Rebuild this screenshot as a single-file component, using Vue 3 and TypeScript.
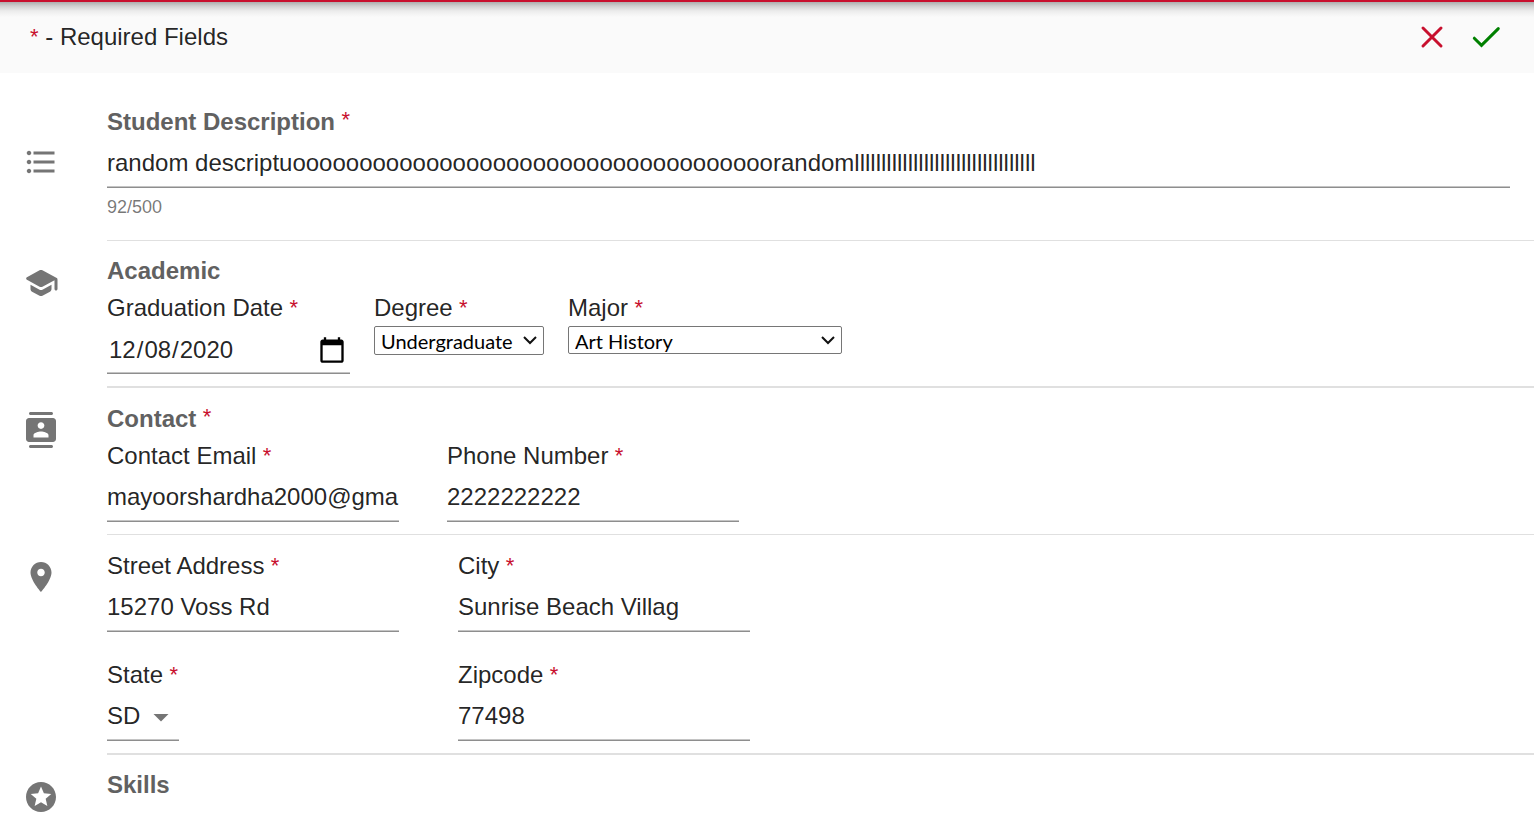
<script setup lang="ts">
import { reactive, computed } from 'vue'

const form = reactive({
  description:
    'random descriptu' + 'o'.repeat(36) + 'random' + 'l'.repeat(34),
  graduation: '2020-12-08',
  degree: 'Undergraduate',
  major: 'Art History',
  email: 'mayoorshardha2000@gmail.com',
  phone: '2222222222',
  street: '15270 Voss Rd',
  city: 'Sunrise Beach Villag',
  state: 'SD',
  zip: '77498',
})

const degrees = ['Undergraduate', 'Graduate']
const majors = ['Art History', 'Biology', 'Computer Science']
const states = ['SD', 'TN', 'TX']
const limit = 500
const used = computed(() => form.description.length)
</script>

<template>
  <form class="page" @submit.prevent>
    <header class="toolbar">
      <p class="legend"><span class="req">*</span> - Required Fields</p>
      <div class="actions">
        <button type="button" class="action cancel" aria-label="Cancel">
          <svg viewBox="0 0 24 24"><path d="M6 6l12 12M18 6L6 18" /></svg>
        </button>
        <button type="submit" class="action save" aria-label="Save">
          <svg viewBox="0 0 24 24"><path d="M4.200 12.800L9 17.600 20.200 6.400" /></svg>
        </button>
      </div>
    </header>

    <section class="row first">
      <div class="icon low">
        <svg viewBox="0 0 24 24"><path d="M4 10.5c-.83 0-1.5.67-1.5 1.5s.67 1.5 1.5 1.5 1.5-.67 1.5-1.5-.67-1.5-1.5-1.5zm0-6c-.83 0-1.5.67-1.5 1.5S3.17 7.5 4 7.5 5.5 6.83 5.5 6 4.83 4.5 4 4.5zm0 12c-.83 0-1.5.68-1.5 1.5s.68 1.5 1.5 1.5 1.5-.68 1.5-1.5-.67-1.5-1.5-1.5zM7 19h14v-2H7v2zm0-6h14v-2H7v2zm0-8v2h14V5H7z" /></svg>
      </div>
      <div class="body">
        <label class="title" for="description">Student Description<span class="req">&thinsp;*</span></label>
        <div class="wide">
          <input id="description" v-model="form.description" class="line" type="text" :maxlength="limit" />
        </div>
        <p class="count">{{ used }}/{{ limit }}</p>
      </div>
    </section>

    <section class="row strong">
      <div class="icon">
        <svg viewBox="0 0 24 24"><path d="M5 13.180v2.810c0 .73.4 1.410 1.040 1.760l5 2.730c.6.330 1.320.330 1.920 0l5-2.730c.64-.35 1.040-1.030 1.040-1.760v-2.810l-6.040 3.300c-.6.330-1.320.330-1.920 0L5 13.180zm6.040-9.660l-8.430 4.600c-.69.380-.69 1.380 0 1.760l8.430 4.600c.6.330 1.320.330 1.920 0L21 10.090V16c0 .55.450 1 1 1s1-.45 1-1V9.590c0-.37-.2-.7-.52-.88l-9.520-5.190c-.6-.32-1.320-.32-1.920 0z" /></svg>
      </div>
      <div class="body">
        <h2 class="title">Academic</h2>
        <div class="fields near">
          <div class="field date">
            <label for="graduation">Graduation Date<span class="req">&thinsp;*</span></label>
            <input id="graduation" v-model="form.graduation" class="line" type="date" />
          </div>
          <div class="field degree">
            <label for="degree">Degree<span class="req">&thinsp;*</span></label>
            <div class="boxed">
              <select id="degree" v-model="form.degree">
                <option v-for="d in degrees" :key="d">{{ d }}</option>
              </select>
              <svg viewBox="0 0 16 12"><path d="M2 3l6 6 6-6" /></svg>
            </div>
          </div>
          <div class="field major">
            <label for="major">Major<span class="req">&thinsp;*</span></label>
            <div class="boxed">
              <select id="major" v-model="form.major">
                <option v-for="m in majors" :key="m">{{ m }}</option>
              </select>
              <svg viewBox="0 0 16 12"><path d="M2 3l6 6 6-6" /></svg>
            </div>
          </div>
        </div>
      </div>
    </section>

    <section class="row after-rule">
      <div class="icon">
        <svg viewBox="0 0 24 24"><path d="M19 0H5c-.55 0-1 .45-1 1s.45 1 1 1h14c.55 0 1-.45 1-1s-.45-1-1-1zM5 24h14c.55 0 1-.45 1-1s-.45-1-1-1H5c-.55 0-1 .45-1 1s.45 1 1 1zM20 4H4c-1.100 0-2 .9-2 2v12c0 1.100.9 2 2 2h16c1.100 0 2-.9 2-2V6c0-1.100-.9-2-2-2zm-8 2.750c1.240 0 2.250 1.010 2.250 2.250s-1.010 2.250-2.250 2.250S9.750 10.240 9.750 9 10.760 6.750 12 6.750zM17 17H7v-1.500c0-1.670 3.330-2.500 5-2.500s5 .83 5 2.500V17z" /></svg>
      </div>
      <div class="body">
        <h2 class="title">Contact<span class="req">&thinsp;*</span></h2>
        <div class="fields far">
          <div class="field">
            <label for="email">Contact Email<span class="req">&thinsp;*</span></label>
            <input id="email" v-model="form.email" class="line" type="text" />
          </div>
          <div class="field">
            <label for="phone">Phone Number<span class="req">&thinsp;*</span></label>
            <input id="phone" v-model="form.phone" class="line" type="text" />
          </div>
        </div>
      </div>
    </section>

    <section class="row strong after-rule">
      <div class="icon">
        <svg viewBox="0 0 24 24"><path d="M12 2C8.130 2 5 5.130 5 9c0 5.250 7 13 7 13s7-7.750 7-13c0-3.870-3.130-7-7-7zm0 9.500c-1.380 0-2.500-1.120-2.500-2.500s1.120-2.500 2.500-2.500 2.500 1.120 2.500 2.500-1.120 2.500-2.500 2.500z" /></svg>
      </div>
      <div class="body">
        <div class="address">
          <div class="field">
            <label for="street">Street Address<span class="req">&thinsp;*</span></label>
            <input id="street" v-model="form.street" class="line" type="text" />
          </div>
          <div class="field">
            <label for="city">City<span class="req">&thinsp;*</span></label>
            <input id="city" v-model="form.city" class="line" type="text" />
          </div>
          <div class="field state">
            <label for="state">State<span class="req">&thinsp;*</span></label>
            <div class="drop">
              <select id="state" v-model="form.state" class="line">
                <option v-for="s in states" :key="s">{{ s }}</option>
              </select>
              <svg viewBox="0 0 24 24"><path d="M7 10l5 5 5-5z" /></svg>
            </div>
          </div>
          <div class="field">
            <label for="zip">Zipcode<span class="req">&thinsp;*</span></label>
            <input id="zip" v-model="form.zip" class="line" type="text" />
          </div>
        </div>
      </div>
    </section>

    <section class="row last">
      <div class="icon">
        <svg viewBox="0 0 24 24"><path d="M11.990 2C6.470 2 2 6.480 2 12s4.470 10 9.990 10C17.520 22 22 17.520 22 12S17.520 2 11.990 2zm4.240 16L12 15.450 7.770 18l1.120-4.810-3.730-3.230 4.920-.42L12 5l1.920 4.530 4.920.42-3.730 3.230L16.230 18z" /></svg>
      </div>
      <div class="body">
        <h2 class="title">Skills</h2>
      </div>
    </section>
  </form>
</template>

<style>
body {
  background: #fff;
  overflow: hidden;
}
</style>

<style scoped>
.page {
  font-family: 'Liberation Sans', Arial, sans-serif;
  font-size: 24px;
  line-height: 28px;
  color: rgba(0, 0, 0, 0.87);
}
.page * {
  box-sizing: border-box;
}
p,
h2 {
  margin: 0;
}
.toolbar {
  display: flex;
  align-items: center;
  justify-content: space-between;
  height: 73px;
  padding: 0 30px 2px;
  border-top: 2px solid #c8102e;
  background: linear-gradient(#aeaeae, #cfcfcf 4px, #ececec 9px, #fafafa 15px);
}
.req {
  color: #c8102e;
  font-size: 22px;
  font-weight: 400;
  line-height: 0;
}
label .req,
.title .req {
  margin-left: 2px;
}
.title .req {
  vertical-align: 3px;
}
.field .req,
.legend .req {
  vertical-align: 1px;
}
.actions {
  display: flex;
  gap: 18px;
}
.action {
  display: block;
  width: 36px;
  height: 36px;
  padding: 0;
  border: 0;
  background: none;
}
.action svg,
.icon svg {
  display: block;
  width: 36px;
  height: 36px;
  fill: currentColor;
}
.action svg {
  fill: none;
  stroke: currentColor;
  stroke-width: 2;
  stroke-linecap: round;
}
.cancel {
  color: #c8102e;
}
.save {
  color: #008000;
}
.row {
  display: flex;
}
.icon {
  flex: 0 0 107px;
  padding: 24px 0 0 23px;
  color: #757575;
}
.icon.low {
  padding-top: 71px;
}
.body {
  flex: 1;
  min-width: 0;
  padding: 16px 0 12px;
  border-bottom: 1px solid #e0e0e0;
}
.strong .body {
  border-bottom-width: 2px;
}
.after-rule .body {
  padding-top: 17px;
}
.first .body {
  padding: 35px 0 20px;
}
.last .body {
  border-bottom: 0;
}
.title {
  display: block;
  font-size: 24px;
  font-weight: 700;
  line-height: 28px;
  color: #616161;
}
.wide {
  padding-right: 24px;
}
.line {
  display: block;
  width: 100%;
  height: 52px;
  margin: 0;
  padding: 2px 0 0;
  border: 0;
  border-bottom: 1px solid #8e8e8e;
  border-radius: 0;
  box-shadow: inset 0 -1px 0 #c4c4c4;
  outline: 0;
  background: none;
  font: inherit;
  color: inherit;
}
.date .line {
  padding: 4px 1px 0;
}
.date .line::-webkit-calendar-picker-indicator {
  width: 28px;
  height: 28px;
  padding: 0;
  margin-right: 3px;
  background-size: 28px 28px;
}
.count {
  padding-top: 6px;
  font-size: 18px;
  line-height: 26px;
  color: rgba(0, 0, 0, 0.54);
}
.fields {
  display: flex;
  align-items: flex-start;
  padding-top: 9px;
}
.near {
  gap: 24px;
}
.far {
  gap: 48px;
}
.field {
  width: 292px;
}
.field label {
  display: block;
}
.date {
  width: 243px;
}
.degree {
  width: 170px;
}
.major {
  width: 274px;
}
.boxed,
.drop {
  position: relative;
}
.boxed {
  margin-top: 4px;
}
.boxed select {
  display: block;
  appearance: none;
  width: 100%;
  height: 28px;
  padding: 1px 24px 0 6px;
  border: 1px solid #767676;
  border-radius: 2px;
  background: #fff;
  font: 20px/24px Lato, sans-serif;
  color: #000;
}
.degree select {
  height: 29px;
}
.boxed svg {
  position: absolute;
  right: 6px;
  top: 8px;
  width: 16px;
  height: 12px;
  fill: none;
  stroke: #111;
  stroke-width: 2;
  pointer-events: none;
}
.address {
  display: grid;
  grid-template-columns: 292px 292px;
  gap: 29px 59px;
}
.state {
  width: 72px;
}
.drop select {
  appearance: none;
}
.drop svg {
  position: absolute;
  right: 0;
  top: 10px;
  width: 36px;
  height: 36px;
  fill: #757575;
  pointer-events: none;
}
</style>
